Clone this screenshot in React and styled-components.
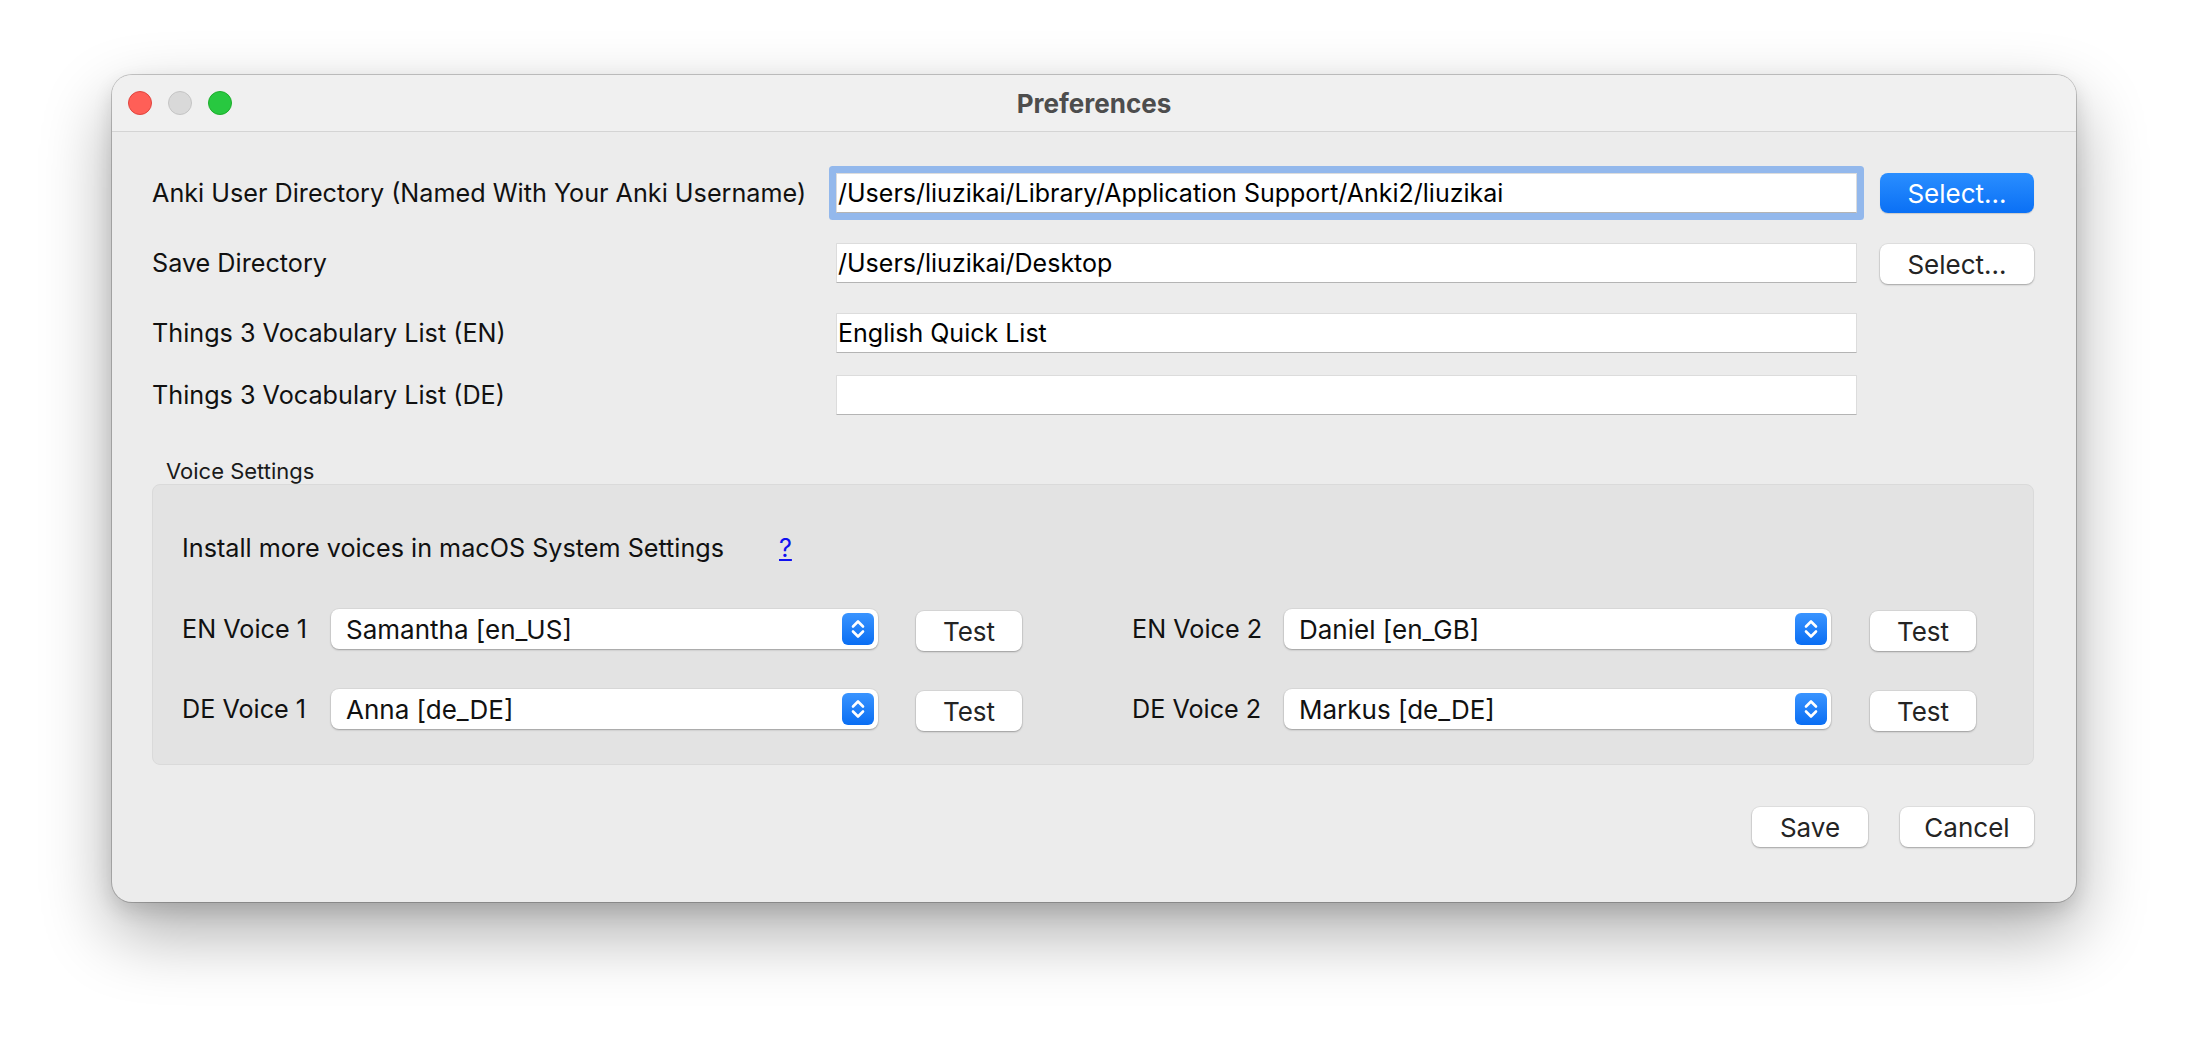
import React from "react";
import styled, { createGlobalStyle } from "styled-components";

const GlobalStyle = createGlobalStyle`
  html, body {
    margin: 0;
    padding: 0;
    background: #ffffff;
  }
  body {
    font-family: Inter, "Liberation Sans", Arial, sans-serif;
    -webkit-font-smoothing: antialiased;
  }
`;

const Desktop = styled.div`
  width: 2188px;
  height: 1050px;
  box-sizing: border-box;
  padding: 75px 0 0 112px;
  background: #ffffff;
`;

const Window = styled.div`
  width: 1964px;
  height: 827px;
  box-sizing: border-box;
  border-radius: 20px;
  overflow: hidden;
  background: #ececec;
  box-shadow: 0 0 0 1px rgba(0, 0, 0, 0.2), 0 30px 70px rgba(0, 0, 0, 0.33),
    0 8px 20px rgba(0, 0, 0, 0.12);
  display: flex;
  flex-direction: column;
`;

const TitleBar = styled.div`
  height: 57px;
  box-sizing: border-box;
  background: #f0f0f0;
  border-bottom: 1px solid #d4d4d4;
  display: grid;
  grid-template-columns: 1fr auto 1fr;
  align-items: center;
  padding: 0 16px;
`;

const Lights = styled.div`
  display: flex;
  gap: 16px;
`;

const Light = styled.span`
  width: 24px;
  height: 24px;
  border-radius: 50%;
  box-sizing: border-box;
  background: ${(p) => p.color};
  border: 1px solid ${(p) => p.edge};
`;

const Title = styled.div`
  font-size: 26px;
  font-weight: 700;
  color: #4d4d4d;
`;

const Content = styled.div`
  padding: 41px 42px 0 40px;
  display: flex;
  flex-direction: column;
`;

const FormGrid = styled.div`
  display: grid;
  grid-template-columns: 661px 1021px 154px;
  grid-template-rows: 70px 70px 62px 40px;
  column-gap: 23px;
  align-items: start;
`;

const Label = styled.div`
  font-size: 25.2px;
  line-height: 40px;
  color: #111111;
  white-space: nowrap;
  width: ${(p) => (p.width ? `${p.width}px` : "auto")};
  flex-shrink: 0;
`;

const TextField = styled.input`
  height: 40px;
  box-sizing: border-box;
  width: 100%;
  margin: 0;
  padding: 0 1px;
  font: inherit;
  font-size: 25px;
  color: #000000;
  background: #ffffff;
  border: 1px solid #dcdcdc;
  border-bottom-color: #b4b4b4;
  border-radius: 1px;
  outline: none;
  box-shadow: ${(p) => (p.focused ? "0 0 0 7px #93b8ec" : "none")};
`;

const Button = styled.button`
  height: 40px;
  width: ${(p) => (p.width ? `${p.width}px` : "auto")};
  margin: 0;
  margin-top: ${(p) => (p.offset ? `${p.offset}px` : "0")};
  margin-left: ${(p) => (p.gap ? `${p.gap}px` : "0")};
  padding: 0;
  font: inherit;
  font-size: 26px;
  border: none;
  border-radius: 8px;
  flex-shrink: 0;
  color: ${(p) => (p.primary ? "#ffffff" : "#242424")};
  background: ${(p) =>
    p.primary ? "linear-gradient(#2a8eff, #0a70f5)" : "#ffffff"};
  box-shadow: ${(p) =>
    p.primary
      ? "0 1px 1px rgba(0, 0, 0, 0.15)"
      : "0 0 0 1px rgba(0, 0, 0, 0.05), 0 1px 2px rgba(0, 0, 0, 0.28)"};
`;

const GroupTitle = styled.div`
  margin-top: 43px;
  padding-left: 14px;
  font-size: 22px;
  line-height: 26px;
  color: #1a1a1a;
`;

const Group = styled.div`
  height: 281px;
  box-sizing: border-box;
  background: #e3e3e3;
  border: 1px solid #dadada;
  border-radius: 8px;
  padding: 43px 59px 0 29px;
  display: flex;
  flex-direction: column;
`;

const InstallRow = styled.div`
  display: flex;
  align-items: center;
  height: 40px;
`;

const HelpLink = styled.a`
  font-size: 25.2px;
  line-height: 40px;
  color: #1010f0;
  text-decoration: underline;
`;

const VoiceRow = styled.div`
  display: grid;
  grid-template-columns: 840px 844px;
  column-gap: 110px;
  margin-top: ${(p) => p.top}px;
`;

const VoiceCell = styled.div`
  display: flex;
  align-items: flex-start;
  height: 40px;
`;

const Combo = styled.div`
  width: 547px;
  height: 40px;
  box-sizing: border-box;
  flex-shrink: 0;
  display: flex;
  align-items: center;
  padding: 0 4px 0 15px;
  background: #ffffff;
  border-radius: 8px;
  box-shadow: 0 0 0 1px rgba(0, 0, 0, 0.04), 0 1px 2px rgba(0, 0, 0, 0.28);
  font-size: 26px;
  color: #111111;
`;

const ComboText = styled.span`
  flex: 1;
`;

const Stepper = styled.span`
  width: 32px;
  height: 32px;
  border-radius: 6px;
  background: linear-gradient(#3a94ff, #0a6ef3);
  display: flex;
  align-items: center;
  justify-content: center;
`;

const Actions = styled.div`
  margin-top: 42px;
  display: flex;
  justify-content: flex-end;
  gap: 32px;
`;

const Chevrons = () => (
  <svg width="32" height="32" viewBox="0 0 32 32">
    <path
      d="M11 13.5 L16 8.5 L21 13.5 M11 18.5 L16 23.5 L21 18.5"
      fill="none"
      stroke="#ffffff"
      strokeWidth="2.6"
      strokeLinecap="round"
      strokeLinejoin="round"
    />
  </svg>
);

const VoiceSelect = ({ label, labelWidth, value, testGap }) => (
  <VoiceCell>
    <Label width={labelWidth}>{label}</Label>
    <Combo>
      <ComboText>{value}</ComboText>
      <Stepper>
        <Chevrons />
      </Stepper>
    </Combo>
    <Button width={106} gap={testGap} offset={2}>
      Test
    </Button>
  </VoiceCell>
);

const App = () => {
  return (
    <Desktop>
      <GlobalStyle />
      <Window>
        <TitleBar>
          <Lights>
            <Light color="#ff5f57" edge="#e0443e" />
            <Light color="#d9d9d9" edge="#c4c4c4" />
            <Light color="#28c840" edge="#1dad2b" />
          </Lights>
          <Title>Preferences</Title>
          <span />
        </TitleBar>
        <Content>
          <FormGrid>
            <Label>Anki User Directory (Named With Your Anki Username)</Label>
            <TextField
              focused
              readOnly
              value="/Users/liuzikai/Library/Application Support/Anki2/liuzikai"
            />
            <Button primary width={154}>
              Select...
            </Button>

            <Label>Save Directory</Label>
            <TextField readOnly value="/Users/liuzikai/Desktop" />
            <Button width={154} offset={1}>
              Select...
            </Button>

            <Label>Things 3 Vocabulary List (EN)</Label>
            <TextField readOnly value="English Quick List" />
            <span />

            <Label>Things 3 Vocabulary List (DE)</Label>
            <TextField readOnly value="" />
            <span />
          </FormGrid>

          <GroupTitle>Voice Settings</GroupTitle>
          <Group>
            <InstallRow>
              <Label width={597}>Install more voices in macOS System Settings</Label>
              <HelpLink href="#">?</HelpLink>
            </InstallRow>
            <VoiceRow top={41}>
              <VoiceSelect
                label="EN Voice 1"
                labelWidth={149}
                value="Samantha [en_US]"
                testGap={38}
              />
              <VoiceSelect
                label="EN Voice 2"
                labelWidth={152}
                value="Daniel [en_GB]"
                testGap={39}
              />
            </VoiceRow>
            <VoiceRow top={40}>
              <VoiceSelect
                label="DE Voice 1"
                labelWidth={149}
                value="Anna [de_DE]"
                testGap={38}
              />
              <VoiceSelect
                label="DE Voice 2"
                labelWidth={152}
                value="Markus [de_DE]"
                testGap={39}
              />
            </VoiceRow>
          </Group>

          <Actions>
            <Button width={116}>Save</Button>
            <Button width={134}>Cancel</Button>
          </Actions>
        </Content>
      </Window>
    </Desktop>
  );
};

export default App;
